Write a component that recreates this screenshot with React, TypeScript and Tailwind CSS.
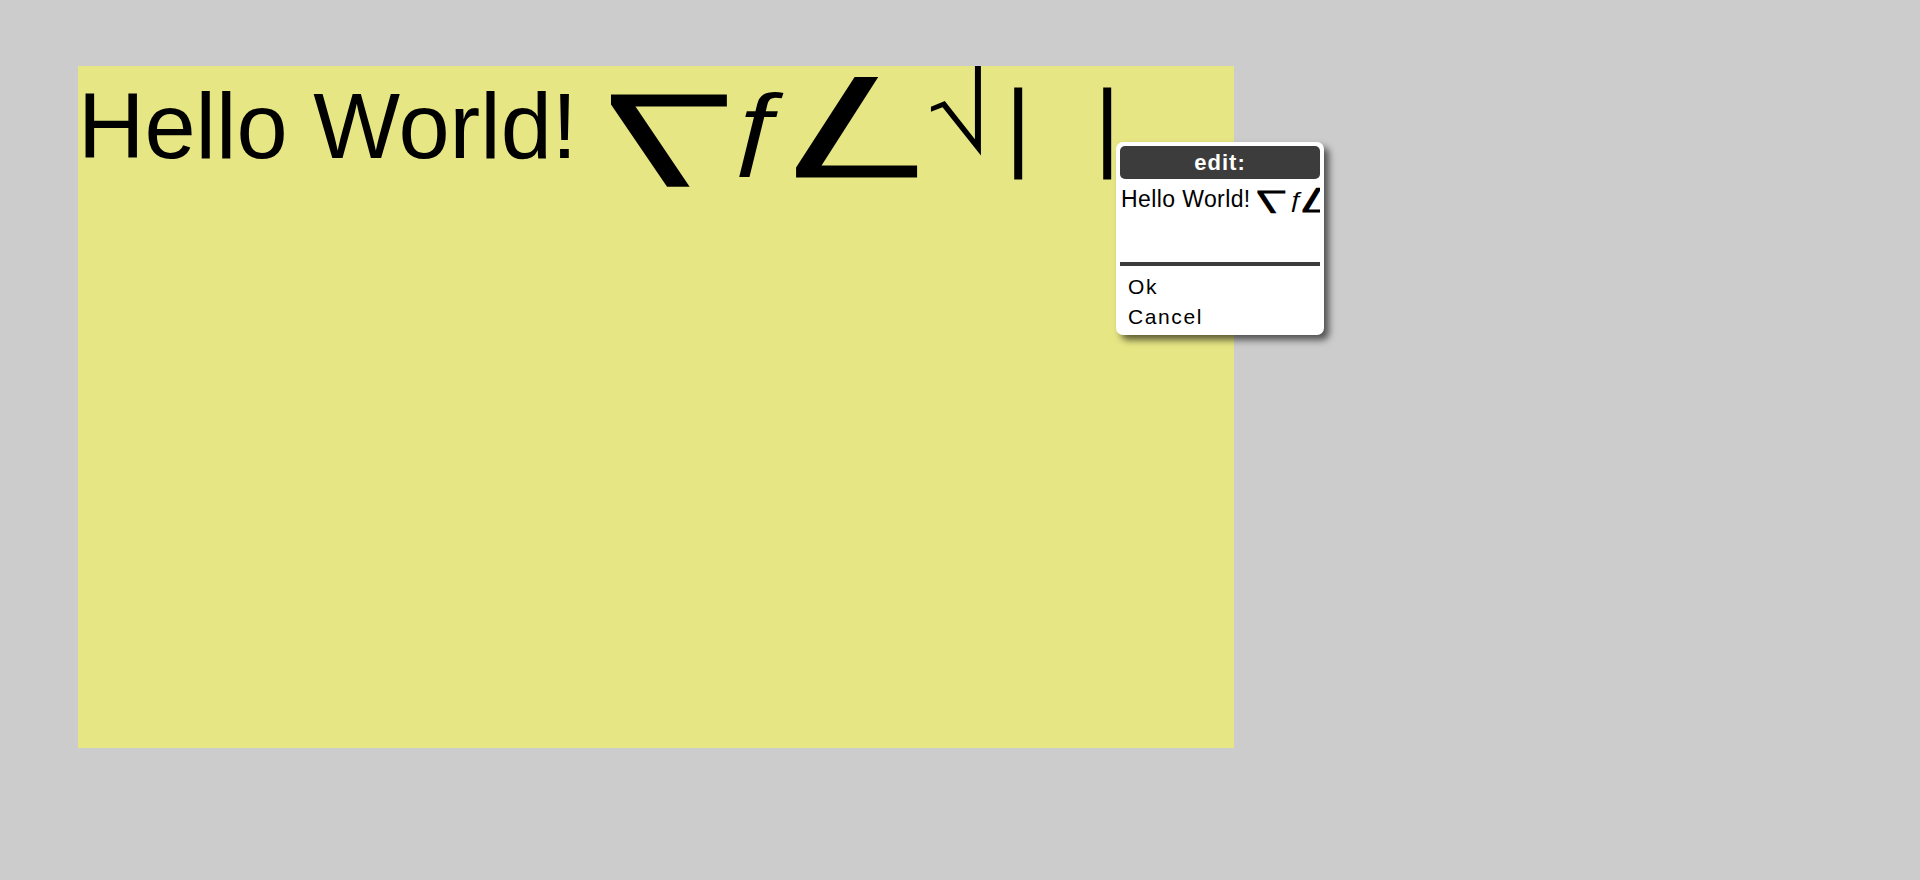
const sym = "font-['DejaVu_Sans',sans-serif]";

export default function App() {
  return (
    <div className="relative min-h-screen bg-[#cccccc] pl-[78px] pt-[66px] font-['Liberation_Sans',Arial,sans-serif] text-black">
      <div className="h-[682px] w-[1156px] overflow-hidden bg-[#e6e685]">
        <div className="whitespace-nowrap pt-[7px] text-[92px] leading-[106px]">
          <span>Hello World! </span>
          <span className={`${sym} ml-[6px] inline-block w-[114px] origin-left scale-x-[1.55] align-[-9px] text-[89px] font-bold leading-[0px]`}>⎲</span>
          <span className="inline-block w-[71px] origin-left scale-x-[1.3] align-[1px] text-[90px] italic leading-[0px]">ƒ</span>
          <span className={`${sym} inline-block w-[136px] origin-left scale-x-[1.47] align-[2px] text-[98px] font-bold leading-[0px]`}>⎳</span>
          <span className={`${sym} inline-block w-[60px] origin-left scale-x-[1.2] align-[26px] text-[78px] leading-[0px]`}>⎷</span>
          <span className={`${sym} ml-[25px] inline-block w-[89px] align-[-3px] font-light leading-[0px]`}>⎸</span>
          <span className={`${sym} inline-block align-[-3px] font-light leading-[0px]`}>⎸</span>
        </div>
      </div>
      <EditPrompt />
    </div>
  );
}

function EditPrompt() {
  return (
    <div className="absolute left-[1116px] top-[142px] flex h-[193px] w-[208px] flex-col rounded-[7px] bg-white p-[4px] shadow-[5px_5px_7px_rgba(0,0,0,0.6)]">
      <div className="flex h-[33px] items-center justify-center rounded-[5px] bg-[#3c3c3c] text-[22px] font-bold tracking-[1px] text-white">
        edit:
      </div>
      <div className="h-[86px] overflow-hidden whitespace-nowrap pl-[1px] pt-[6px] text-[23px] leading-[28px] tracking-[0.4px]">
        Hello World!{" "}
        <span className={`${sym} inline-block w-[31px] origin-left scale-x-[1.5] align-[-2px] text-[22px] font-bold leading-[0px]`}>⎲</span>
        <span className="inline-block w-[14px] origin-left scale-x-[1.2] text-[22px] italic leading-[0px]">ƒ</span>
        <span className={`${sym} inline-block w-[30px] origin-left scale-x-[1.4] text-[24px] font-bold leading-[0px]`}>⎳</span>
        <span className={sym}>⎷⎸⎸</span>
      </div>
      <div className="h-[4px] bg-[#3c3c3c]" />
      <ul className="pl-[8px] pt-[6px] text-[21px] leading-[29.5px] tracking-[1.6px]">
        <li>Ok</li>
        <li>Cancel</li>
      </ul>
    </div>
  );
}
